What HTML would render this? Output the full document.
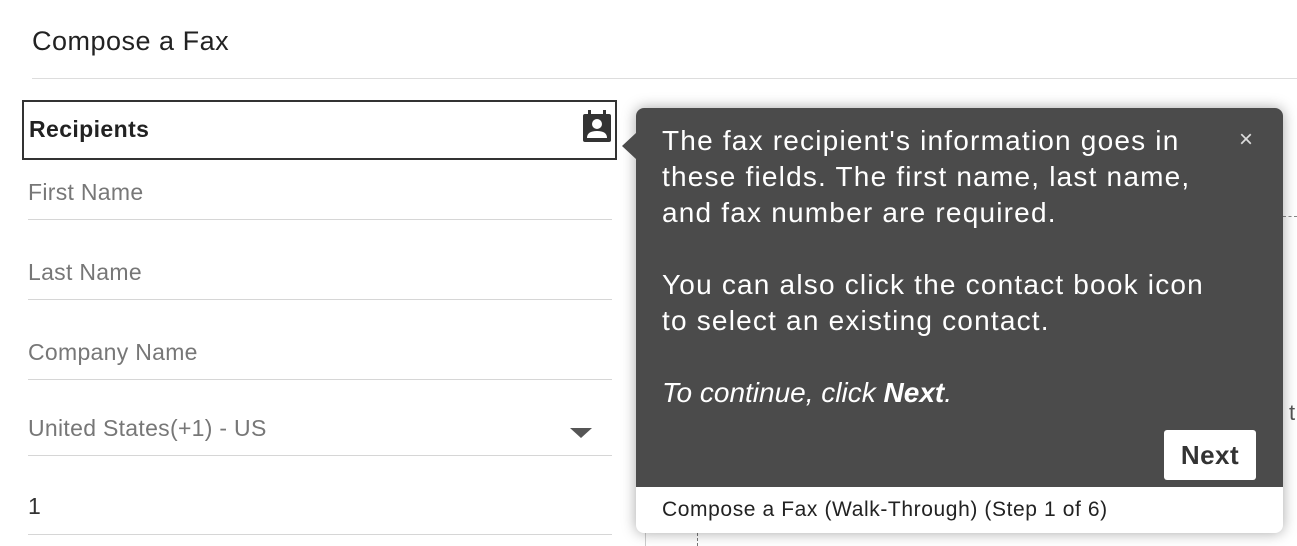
<!DOCTYPE html>
<html><head><style>
body{margin:0;width:1297px;height:546px;background:#fff;position:relative;overflow:hidden;font-family:"Liberation Sans",sans-serif}
.a{position:absolute}
.lbl{position:absolute;left:28px;font-size:23px;color:#777;letter-spacing:0.3px}
.ln{position:absolute;left:28px;width:584px;height:1px;background:#d6d6d6}
</style></head><body>
<div class="a" style="left:32px;top:26px;font-size:27px;color:#222;letter-spacing:0.5px">Compose a Fax</div>
<div class="a" style="left:32px;top:78px;width:1265px;height:1px;background:#ddd"></div>
<div class="a" style="left:22px;top:100px;width:591px;height:56px;border:2px solid #333"></div>
<div class="a" style="left:29px;top:116px;font-size:23px;font-weight:bold;color:#222;letter-spacing:0.4px">Recipients</div>
<svg class="a" style="left:581px;top:110px" width="32" height="34" viewBox="0 0 32 34">
<rect x="2" y="4" width="28" height="28" rx="2" fill="#333"/>
<rect x="7" y="0" width="3" height="7" fill="#333"/><rect x="22" y="0" width="3" height="7" fill="#333"/>
<circle cx="16" cy="14" r="5" fill="#fff"/><path d="M6 28 Q6 21 16 21 Q26 21 26 28Z" fill="#fff"/>
</svg>
<div class="lbl" style="top:179px">First Name</div><div class="ln" style="top:219px"></div>
<div class="lbl" style="top:259px">Last Name</div><div class="ln" style="top:299px"></div>
<div class="lbl" style="top:339px">Company Name</div><div class="ln" style="top:379px"></div>
<div class="lbl" style="top:415px">United States(+1) - US</div>
<div class="a" style="left:570px;top:428px;width:0;height:0;border-left:11px solid transparent;border-right:11px solid transparent;border-top:10px solid #555"></div>
<div class="ln" style="top:455px"></div>
<div class="lbl" style="top:493px;color:#333">1</div><div class="ln" style="top:534px"></div>
<div class="a" style="left:645px;top:533px;width:1px;height:13px;background:#ccc"></div>
<div class="a" style="left:697px;top:533px;width:0;height:13px;border-left:1px dashed #777"></div>
<div class="a" style="left:1283px;top:216px;width:14px;border-top:1px dashed #888"></div>
<div class="a" style="left:1289px;top:400px;font-size:22px;color:#555">t</div>
<div class="a" style="left:636px;top:108px;width:647px;height:425px;border-radius:8px;background:#fff;box-shadow:0 0 14px rgba(0,0,0,.35);overflow:hidden">
<div style="height:379px;background:#4b4b4b;position:relative;color:#fff;font-size:28px;line-height:36px;letter-spacing:1.2px">
<div style="position:absolute;left:26px;top:15px;width:600px;white-space:nowrap">The fax recipient's information goes in<br>these fields. The first name, last name,<br>and fax number are required.<br><br>You can also click the contact book icon<br>to select an existing contact.<br><br><i style="letter-spacing:0">To continue, click <b>Next</b>.</i></div>
<div style="position:absolute;left:603px;top:14px;font-size:24px;color:#ddd">×</div>
<div style="position:absolute;left:528px;top:322px;width:92px;height:50px;background:#fff;border-radius:3px;color:#333;font-weight:bold;font-size:26px;line-height:50px;text-align:center;letter-spacing:0.5px">Next</div>
</div>
<div style="padding-left:26px;font-size:21px;line-height:46px;color:#222;letter-spacing:0.6px">Compose a Fax (Walk-Through) (Step 1 of 6)</div>
</div>
<div class="a" style="left:622px;top:133px;width:0;height:0;border-top:13px solid transparent;border-bottom:13px solid transparent;border-right:14px solid #4b4b4b"></div>
</body></html>
